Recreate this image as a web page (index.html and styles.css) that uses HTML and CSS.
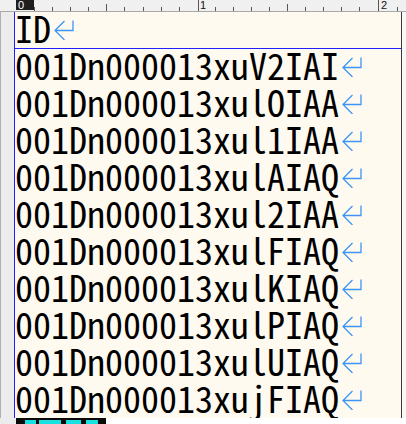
FILE: index.html
```html
<!DOCTYPE html>
<html>
<head>
<meta charset="utf-8">
<link rel="stylesheet" href="styles.css">
</head>
<body>
<div class="app">
  <div class="ruler">
    <svg class="ruler-svg" width="406" height="11" viewBox="0 0 406 11">
      <rect x="16" y="0" width="18" height="10" fill="#1e1e1e"/>
      <text x="18" y="9" class="rl rl-w">0</text>
      <g fill="#555">
        <rect x="34" y="7" width="1" height="4"/>
        <rect x="52" y="7" width="1" height="4"/>
        <rect x="70" y="7" width="1" height="4"/>
        <rect x="88" y="7" width="1" height="4"/>
        <rect x="106" y="4" width="1" height="7"/>
        <rect x="124" y="7" width="1" height="4"/>
        <rect x="143" y="7" width="1" height="4"/>
        <rect x="161" y="7" width="1" height="4"/>
        <rect x="179" y="7" width="1" height="4"/>
        <rect x="198" y="0" width="1" height="11"/>
        <rect x="215" y="7" width="1" height="4"/>
        <rect x="233" y="7" width="1" height="4"/>
        <rect x="251" y="7" width="1" height="4"/>
        <rect x="269" y="7" width="1" height="4"/>
        <rect x="287" y="4" width="1" height="7"/>
        <rect x="305" y="7" width="1" height="4"/>
        <rect x="323" y="7" width="1" height="4"/>
        <rect x="341" y="7" width="1" height="4"/>
        <rect x="359" y="7" width="1" height="4"/>
        <rect x="378" y="0" width="1" height="11"/>
        <rect x="397" y="7" width="1" height="4"/>
      </g>
      <text x="200" y="9" class="rl">1</text>
      <text x="381" y="9" class="rl">2</text>
    </svg>
  </div>
  <div class="main">
    <div class="gutter"></div>
    <div class="page">
      <div class="row idrow"><span class="t">ID</span><svg class="ret" width="20" height="20" viewBox="0 0 20 20"><path d="M19 0.5V10.5H1M10.5 1L1 10.5L10.5 20"/></svg></div>
      <div class="rows">
        <div class="row"><span class="t">001Dn000013xuV2IAI</span><svg class="ret" width="20" height="20" viewBox="0 0 20 20"><path d="M19 0.5V10.5H1M10.5 1L1 10.5L10.5 20"/></svg></div>
        <div class="row"><span class="t">001Dn000013xulOIAA</span><svg class="ret" width="20" height="20" viewBox="0 0 20 20"><path d="M19 0.5V10.5H1M10.5 1L1 10.5L10.5 20"/></svg></div>
        <div class="row"><span class="t">001Dn000013xul1IAA</span><svg class="ret" width="20" height="20" viewBox="0 0 20 20"><path d="M19 0.5V10.5H1M10.5 1L1 10.5L10.5 20"/></svg></div>
        <div class="row"><span class="t">001Dn000013xulAIAQ</span><svg class="ret" width="20" height="20" viewBox="0 0 20 20"><path d="M19 0.5V10.5H1M10.5 1L1 10.5L10.5 20"/></svg></div>
        <div class="row"><span class="t">001Dn000013xul2IAA</span><svg class="ret" width="20" height="20" viewBox="0 0 20 20"><path d="M19 0.5V10.5H1M10.5 1L1 10.5L10.5 20"/></svg></div>
        <div class="row"><span class="t">001Dn000013xulFIAQ</span><svg class="ret" width="20" height="20" viewBox="0 0 20 20"><path d="M19 0.5V10.5H1M10.5 1L1 10.5L10.5 20"/></svg></div>
        <div class="row"><span class="t">001Dn000013xulKIAQ</span><svg class="ret" width="20" height="20" viewBox="0 0 20 20"><path d="M19 0.5V10.5H1M10.5 1L1 10.5L10.5 20"/></svg></div>
        <div class="row"><span class="t">001Dn000013xulPIAQ</span><svg class="ret" width="20" height="20" viewBox="0 0 20 20"><path d="M19 0.5V10.5H1M10.5 1L1 10.5L10.5 20"/></svg></div>
        <div class="row"><span class="t">001Dn000013xulUIAQ</span><svg class="ret" width="20" height="20" viewBox="0 0 20 20"><path d="M19 0.5V10.5H1M10.5 1L1 10.5L10.5 20"/></svg></div>
        <div class="row"><span class="t">001Dn000013xujFIAQ</span><svg class="ret" width="20" height="20" viewBox="0 0 20 20"><path d="M19 0.5V10.5H1M10.5 1L1 10.5L10.5 20"/></svg></div>
      </div>
    </div>
    <div class="edge"></div>
  </div>
  <div class="bottom">
    <div class="bottom-gutter"></div>
    <div class="tab">
      <span class="cy cy1"></span><span class="cy cy2"></span><span class="cy cy3"></span><span class="cy cy4"></span>
    </div>
    <div class="bottom-rest"></div>
  </div>
</div>
</body>
</html>
```
FILE: styles.css
```css
html, body {
  margin: 0;
  padding: 0;
  background: #f8f8f8;
}
.app {
  width: 406px;
  height: 424px;
  overflow: hidden;
  display: grid;
  grid-template-rows: 12px 406px 6px;
}
.ruler {
  background: #f0f0f0;
  border-bottom: 1px solid #a8a8a8;
  height: 11px;
}
.ruler-svg {
  display: block;
}
.rl {
  font-family: "Liberation Sans", Arial, sans-serif;
  font-size: 11px;
  fill: #111;
}
.rl-w {
  fill: #fff;
}
.main {
  display: grid;
  grid-template-columns: 14px 388px 4px;
}
.gutter {
  background: #ececec;
  border-left: 1px solid #b0b0b0;
}
.page {
  background: #fffaf0;
  border-left: 1px solid #2020ff;
  border-right: 1px solid #3a3a3a;
  font-family: "Noto Sans CJK JP", "DejaVu Sans Mono", monospace;
  font-feature-settings: "hwid" 1;
  font-size: 36px;
  line-height: 31px;
  color: #000;
  white-space: nowrap;
}
.edge {
  background: #f8f8f8;
}
.row {
  height: 37px;
}
.idrow {
  box-sizing: border-box;
  border-bottom: 1px solid #2020ff;
}
.t {
  display: inline-block;
}
.ret {
  vertical-align: 3px;
  margin-left: 3px;
}
.ret path {
  fill: none;
  stroke: #3d95f5;
  stroke-width: 1.3;
}
.bottom {
  display: grid;
  grid-template-columns: 16px 90px 1fr;
}
.bottom-gutter {
  background: #ececec;
}
.tab {
  background: #0a0a0a;
  display: flex;
  align-items: flex-end;
  padding-left: 9px;
  gap: 3px;
}
.cy {
  height: 4px;
  background: #19e0e0;
}
.cy1 { width: 11px; }
.cy2 { width: 22px; }
.cy3 { width: 15px; margin-left: 2px; }
.cy4 { width: 12px; margin-left: 2px; }
.bottom-rest {
  background: #ffffff;
}
```
